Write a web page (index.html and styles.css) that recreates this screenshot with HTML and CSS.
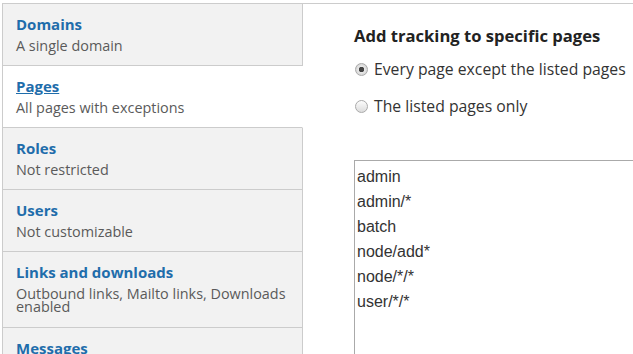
FILE: index.html
```
<!DOCTYPE html>
<html lang="en">
<head>
    <meta charset="UTF-8">
    <meta name="viewport" content="width=device-width, initial-scale=1.0">
    <title>Tracking scope</title>
    <link rel="stylesheet" href="styles.css">
</head>
<body>
    <div class="vertical-tabs">
        <!-- Menu de abas -->
        <ul class="tabs-menu">
            <li class="tab">
                <a href="#" class="tab-title">Domains</a>
                <span class="tab-summary">A single domain</span>
            </li>
            <li class="tab active">
                <a href="#" class="tab-title">Pages</a>
                <span class="tab-summary">All pages with exceptions</span>
            </li>
            <li class="tab">
                <a href="#" class="tab-title">Roles</a>
                <span class="tab-summary">Not restricted</span>
            </li>
            <li class="tab">
                <a href="#" class="tab-title">Users</a>
                <span class="tab-summary">Not customizable</span>
            </li>
            <li class="tab">
                <a href="#" class="tab-title">Links and downloads</a>
                <span class="tab-summary">Outbound links, Mailto links, Downloads enabled</span>
            </li>
            <li class="tab">
                <a href="#" class="tab-title">Messages</a>
                <span class="tab-summary">Not tracked</span>
            </li>
        </ul>

        <!-- Painel ativo -->
        <div class="tabs-pane">
            <h3 class="pane-title">Add tracking to specific pages</h3>
            <div class="radio-row">
                <input type="radio" id="mode-except" name="mode" checked>
                <label for="mode-except">Every page except the listed pages</label>
            </div>
            <div class="radio-row">
                <input type="radio" id="mode-only" name="mode">
                <label for="mode-only">The listed pages only</label>
            </div>
            <textarea class="pages-list" rows="10">admin
admin/*
batch
node/add*
node/*/*
user/*/*</textarea>
        </div>
    </div>
</body>
</html>
```

FILE: styles.css
```
body {
    margin: 0;
    height: 354px;
    overflow: hidden;
    background: #fff;
    font-family: 'Open Sans', 'Segoe UI', sans-serif;
    color: #333;
}

.vertical-tabs {
    display: flex;
    margin: 3px 0 0 2px;
    border-top: 1px solid #ccc;
    border-left: 1px solid #ccc;
}

.tabs-menu {
    list-style: none;
    margin: 0;
    padding: 0;
    width: 300px;
    flex-shrink: 0;
}

.tab {
    display: flex;
    flex-direction: column;
    padding: 10px 13px 13px 13px;
    background: #f2f2f2;
    border-right: 1px solid #ccc;
    border-bottom: 1px solid #ccc;
}

.tab.active {
    background: #fff;
    border-right-color: #fff;
}

.tab-title {
    font-size: 15px;
    line-height: 20px;
    font-weight: bold;
    color: #1f6dab;
    text-decoration: none;
}

.tab.active .tab-title {
    text-decoration: underline;
}

.tab-summary {
    margin-top: 4.5px;
    font-size: 14.4px;
    line-height: 13.5px;
    color: #5a5a5a;
}

.tabs-pane {
    flex: 1;
    padding: 22px 0 0 51px;
    min-width: 0;
}

.pane-title {
    margin: 0 0 13px 0;
    font-size: 16.6px;
    line-height: 20px;
    font-weight: bold;
    color: #222;
    white-space: nowrap;
}

.radio-row {
    display: flex;
    align-items: center;
    font-size: 15.75px;
    line-height: 20px;
    color: #333;
    margin-bottom: 17px;
    white-space: nowrap;
}

.radio-row input {
    appearance: none;
    -webkit-appearance: none;
    flex-shrink: 0;
    width: 13px;
    height: 13px;
    margin: 0 6px 0 1px;
    border: 1px solid #aaa;
    border-radius: 50%;
    background: linear-gradient(#fcfcfc, #dcdcdc);
    box-sizing: border-box;
}

.radio-row input:checked {
    background: radial-gradient(circle, #444 0, #444 2.5px, #e8e8e8 3px, #d4d4d4 6px);
}

.pages-list {
    display: block;
    margin-top: 44px;
    width: 320px;
    height: 200px;
    padding: 3px 2px;
    border: 1px solid #aaa;
    border-radius: 0;
    font-family: 'Liberation Sans', Arial, sans-serif;
    font-size: 16px;
    line-height: 25px;
    color: #333;
    resize: none;
    box-sizing: border-box;
}
```
